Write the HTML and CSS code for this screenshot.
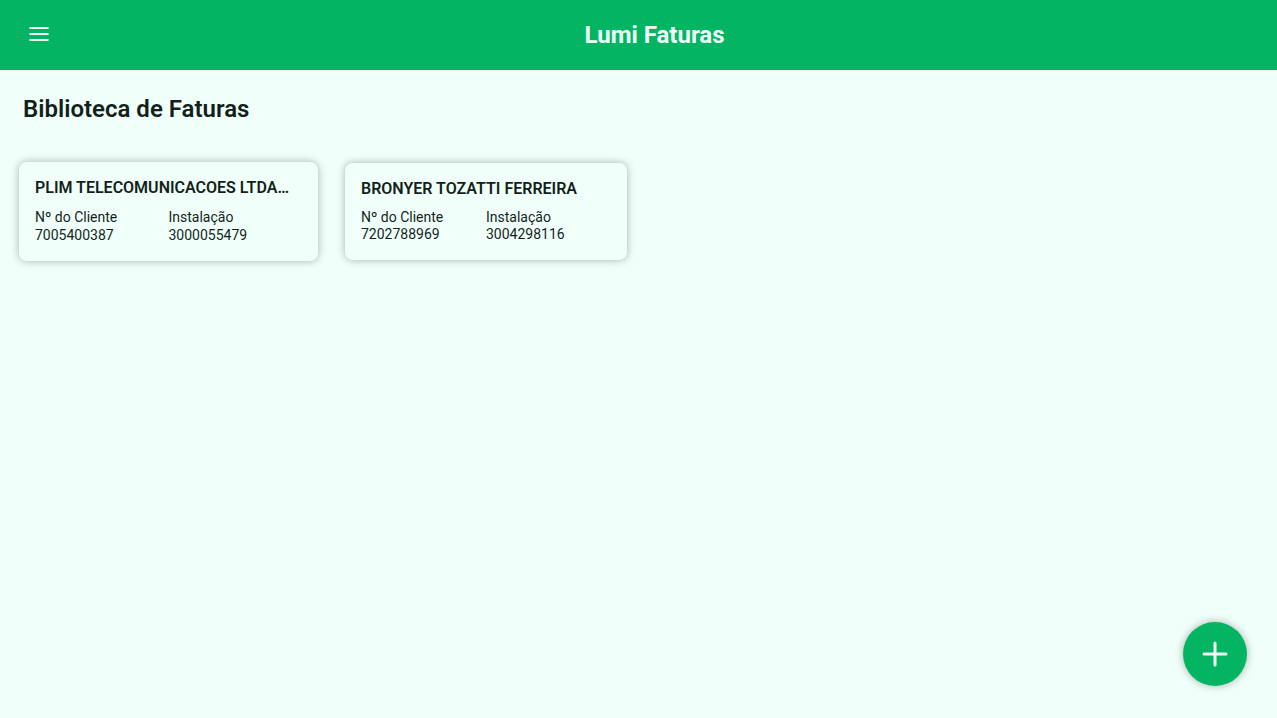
FILE: index.html
```html
<!DOCTYPE html>
<html lang="pt-BR">
<head>
<meta charset="utf-8">
<meta name="viewport" content="width=device-width, initial-scale=1">
<title>Lumi Faturas</title>
<link rel="stylesheet" href="styles.css">
</head>
<body>
<header class="topbar">
  <button class="menu-button" type="button" aria-label="Menu">
    <svg width="24" height="24" viewBox="0 0 24 24" fill="none" stroke="currentColor" stroke-width="2" stroke-linecap="round" aria-hidden="true"><path d="M3.2 6h17.6M3.2 12h17.6M3.2 18h17.6"/></svg>
  </button>
  <h1 class="brand">Lumi Faturas</h1>
</header>
<main class="library">
  <h2 class="library-title">Biblioteca de Faturas</h2>
  <div class="cards">
    <a class="card card-active" href="#7005400387">
      <h3 class="card-title">PLIM TELECOMUNICACOES LTDA…</h3>
      <dl class="details">
        <div><dt>Nº do Cliente</dt><dd>7005400387</dd></div>
        <div><dt>Instalação</dt><dd>3000055479</dd></div>
      </dl>
    </a>
    <a class="card" href="#7202788969">
      <h3 class="card-title">BRONYER TOZATTI FERREIRA</h3>
      <dl class="details">
        <div><dt>Nº do Cliente</dt><dd>7202788969</dd></div>
        <div><dt>Instalação</dt><dd>3004298116</dd></div>
      </dl>
    </a>
  </div>
</main>
<button class="add-button" type="button" aria-label="Adicionar fatura">
  <svg width="32" height="32" viewBox="0 0 32 32" fill="none" stroke="currentColor" stroke-width="3" stroke-linecap="round" aria-hidden="true"><path d="M16 5v22M5 16h22"/></svg>
</button>
</body>
</html>
```
FILE: styles.css
```css
* {
  box-sizing: border-box;
  margin: 0;
}

body {
  min-height: 100vh;
  background: #f0fff9;
  color: #141f1c;
  font-family: Roboto, sans-serif;
}

button {
  border: 0;
  padding: 0;
  cursor: pointer;
  color: #f0fff9;
}

.topbar {
  display: flex;
  align-items: center;
  height: 70px;
  padding: 0 24px 0 22px;
  background: #03b562;
  color: #f0fff9;
}

.menu-button {
  display: flex;
  align-items: center;
  justify-content: center;
  width: 34px;
  height: 36px;
  margin-bottom: 2px;
  background: none;
}

.brand {
  flex: 1;
  text-align: center;
  font-size: 24px;
  line-height: 28px;
  font-weight: 700;
}

.library {
  padding: 25px 19px;
}

.library-title {
  padding: 0 4px;
  font-size: 24px;
  line-height: 28px;
  font-weight: 600;
}

.cards {
  display: flex;
  flex-wrap: wrap;
  align-items: center;
  gap: 27px;
  margin-top: 39px;
}

.card {
  width: 282px;
  padding: 16px 16px 17px;
  border-radius: 8px;
  background: #f0fff9;
  box-shadow: 0 0 8px rgba(0, 0, 0, 0.3);
  color: inherit;
  text-decoration: none;
}

.card-active {
  width: 299px;
}

.card-title {
  overflow: hidden;
  white-space: nowrap;
  font-size: 16px;
  line-height: 19px;
  font-weight: 600;
}

.details {
  display: grid;
  grid-template-columns: 1fr 1fr;
  margin-top: 11px;
  font-size: 14px;
  line-height: 17px;
  font-weight: 400;
}

.card-active .details {
  line-height: 18px;
}

.details dd {
  margin: 0;
}

.add-button {
  position: fixed;
  right: 30px;
  bottom: 32px;
  display: flex;
  align-items: center;
  justify-content: center;
  width: 64px;
  height: 64px;
  border-radius: 50%;
  background: #03b562;
  box-shadow: 0 0 8px rgba(0, 0, 0, 0.3);
}
```
